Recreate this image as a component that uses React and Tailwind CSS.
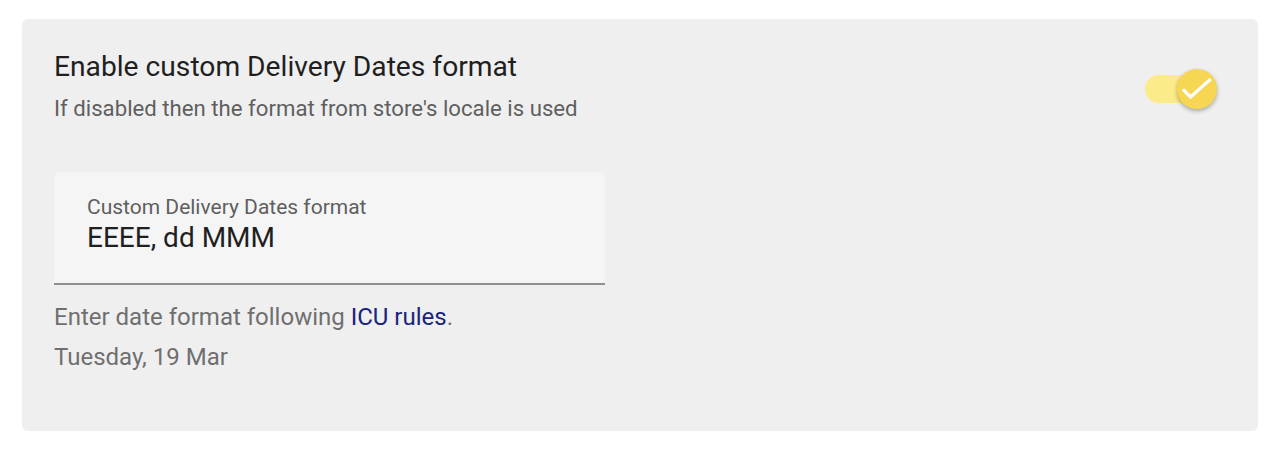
import { useState } from 'react';

const App = () => {
    const [enabled, setEnabled] = useState(true);
    const [format, setFormat] = useState('EEEE, dd MMM');

    return (
        <div className="w-[1276px] h-[454px] bg-white pt-[19px] pl-[22px]" style={{ fontFamily: 'Roboto, "Noto Sans", sans-serif' }}>
            <div className="w-[1236px] h-[412px] bg-[#efefef] rounded-[6px] pl-8 pr-10 pt-[30px]">
                <div className="flex justify-between items-start">
                    <div>
                        <h1 className="text-[28.2px] leading-[36px] text-[#1f1f1f]">Enable custom Delivery Dates format</h1>
                        <p className="mt-[9px] text-[22.2px] leading-[28px] text-[#5f5f5f]">If disabled then the format from store's locale is used</p>
                    </div>
                    <button
                        onClick={() => setEnabled(!enabled)}
                        className="relative mt-[20px] mr-[1px] w-[72px] h-[40px] flex items-center"
                    >
                        <span className={`absolute left-0 w-[54px] h-[28px] rounded-full ${enabled ? 'bg-[#fcec89]' : 'bg-[#cfcfcf]'}`}></span>
                        <span className={`absolute top-0 ${enabled ? 'left-[32px] bg-[#f6d653]' : 'left-0 bg-white'} w-[40px] h-[40px] rounded-full shadow-[0_2px_4px_rgba(0,0,0,0.3)]`}>
                            {enabled && (
                                <svg width="40" height="40" viewBox="0 0 40 40" fill="none">
                                    <path d="M7 21.5l6.5 6.5L32.5 11" stroke="white" strokeWidth="3.2" strokeLinecap="square" />
                                </svg>
                            )}
                        </span>
                    </button>
                </div>

                <div className="mt-[50px] w-[551px] h-[113px] bg-[#f5f5f5] rounded-t-[6px] border-b-2 border-[#8f8f8f] px-[33px] pt-[21px]">
                    <label className="block text-[21px] leading-[28px] text-[#5f5f5f]">Custom Delivery Dates format</label>
                    <input
                        value={format}
                        onChange={e => setFormat(e.target.value)}
                        className="block w-full bg-transparent outline-none text-[28px] leading-[34px] text-[#1f1f1f]"
                    />
                </div>

                <p className="mt-[16px] text-[24px] leading-[32px] text-[#6f6f6f]">
                    Enter date format following <a href="#" className="text-[#1a237e]">ICU rules</a>.
                </p>
                <p className="mt-[8px] text-[24px] leading-[32px] text-[#6f6f6f]">Tuesday, 19 Mar</p>
            </div>
        </div>
    );
};

export default App;
